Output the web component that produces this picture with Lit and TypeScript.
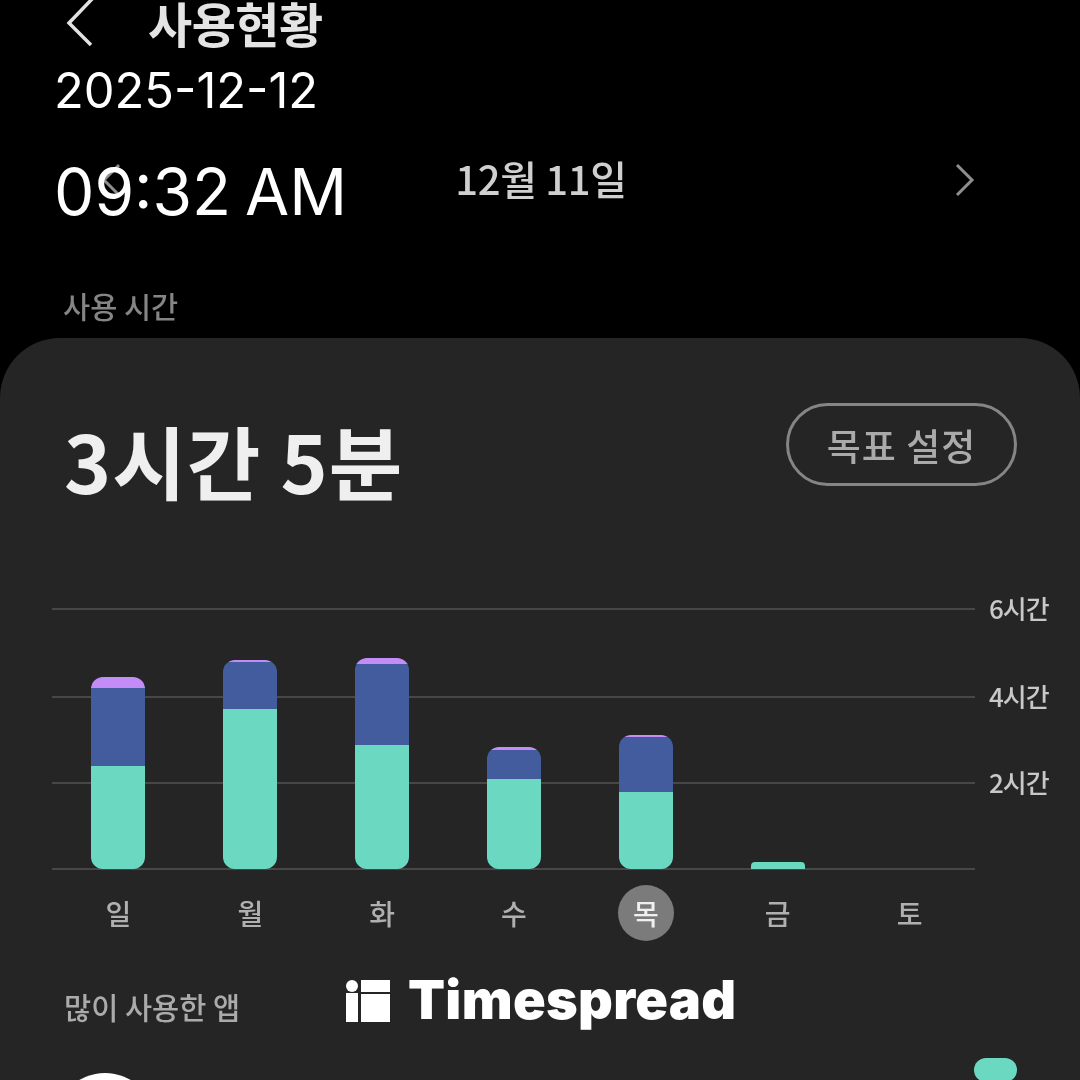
import { LitElement, html, css } from 'lit';
import { customElement } from 'lit/decorators.js';

interface Day {
  label: string;
  purple: number;
  blue: number;
  teal: number;
  today?: boolean;
}

const DAYS: Day[] = [
  { label: '일', purple: 11, blue: 78, teal: 103 },
  { label: '월', purple: 2, blue: 47, teal: 160 },
  { label: '화', purple: 6, blue: 81, teal: 124 },
  { label: '수', purple: 3, blue: 29, teal: 90 },
  { label: '목', purple: 2, blue: 55, teal: 77, today: true },
  { label: '금', purple: 0, blue: 0, teal: 7 },
  { label: '토', purple: 0, blue: 0, teal: 0 },
];

const TICKS = ['6시간', '4시간', '2시간', ''];

@customElement('app-root')
export class AppRoot extends LitElement {
  static styles = css`
    :host {
      display: block;
      position: relative;
      width: 1080px;
      height: 1080px;
      overflow: hidden;
      background: #000;
      font-family: 'Noto Sans CJK KR', 'Noto Sans', sans-serif;
      color: #fff;
    }

    .screen {
      filter: blur(0.7px);
    }

    .header {
      display: flex;
      align-items: center;
      height: 50px;
      padding-left: 66px;
      gap: 51px;
    }

    .back {
      width: 31px;
      height: 50px;
      fill: none;
      stroke: #e2e2e2;
      stroke-width: 3.5;
    }

    .title {
      margin-top: -6px;
      font-size: 48px;
      font-weight: 700;
      line-height: 50px;
      letter-spacing: -0.5px;
      color: #e4e4e4;
    }

    .date-nav {
      display: flex;
      align-items: center;
      justify-content: space-between;
      height: 60px;
      margin-top: 100px;
      padding: 0 105px 0 101px;
    }

    .date-nav svg {
      width: 20px;
      height: 34px;
      fill: none;
      stroke: #8e8e8e;
      stroke-width: 3;
    }

    .date-nav span {
      margin: -4px 0 0 6px;
      font-size: 40px;
      font-weight: 500;
      color: #cfcfcf;
      letter-spacing: -0.3px;
    }

    .section {
      height: 40px;
      line-height: 40px;
      margin: 75px 0 13px 63px;
      font-size: 29.5px;
      font-weight: 500;
      color: #858585;
    }

    .card {
      height: 742px;
      padding-top: 65px;
      box-sizing: border-box;
      background: #252525;
      border-radius: 60px 60px 0 0;
    }

    .summary {
      display: flex;
      justify-content: space-between;
      align-items: flex-start;
      padding: 0 63px 0 64px;
    }

    .total {
      margin-top: 14px;
      height: 86px;
      line-height: 85px;
      font-size: 80px;
      font-weight: 700;
      letter-spacing: 1px;
      color: #efefef;
    }

    .goal {
      display: flex;
      align-items: center;
      justify-content: center;
      width: 231px;
      height: 83px;
      box-sizing: border-box;
      border: 3px solid #858585;
      border-radius: 42px;
      font-size: 37px;
      font-weight: 500;
      letter-spacing: 1px;
      color: #aaa;
    }

    .chart {
      position: relative;
      margin: 105px 0 0 52px;
    }

    .tick {
      display: flex;
      align-items: center;
      height: 2px;
      gap: 14px;
    }

    .tick:nth-child(2) {
      margin-top: 86px;
    }

    .tick:nth-child(n + 3) {
      margin-top: 84px;
    }

    .tick i {
      width: 923px;
      height: 2px;
      background: #474747;
    }

    .tick span {
      margin-top: -4px;
      font-size: 26px;
      font-weight: 500;
      letter-spacing: -1px;
      color: #c8c8c8;
    }

    .bars {
      position: absolute;
      left: 0.5px;
      bottom: 1px;
      width: 923px;
      display: grid;
      grid-template-columns: repeat(7, 1fr);
      align-items: end;
      justify-items: center;
    }

    .bar {
      display: flex;
      flex-direction: column;
      width: 54px;
      overflow: hidden;
      border-radius: 12px;
    }

    .bar.low {
      border-radius: 4px 4px 0 0;
    }

    .purple {
      background: #c48cf6;
    }

    .blue {
      background: #435c9e;
    }

    .teal {
      background: #6bd9c2;
    }

    .days {
      display: grid;
      grid-template-columns: repeat(7, 1fr);
      width: 923px;
      margin: 15px 0 0 52.5px;
      justify-items: center;
    }

    .day {
      display: flex;
      align-items: center;
      justify-content: center;
      width: 56px;
      height: 56px;
      border-radius: 50%;
      font-size: 28px;
      font-weight: 500;
      color: #b0b0b0;
    }

    .day.today {
      background: #7b7b7b;
      color: #f0f0f0;
    }

    .apps {
      height: 40px;
      line-height: 40px;
      margin: 45px 0 0 64px;
      font-size: 29.5px;
      font-weight: 500;
      color: #ababab;
    }

    .top-app {
      display: flex;
      justify-content: space-between;
      align-items: flex-start;
      margin-top: 32px;
      padding: 0 63px 0 55px;
    }

    .app-icon {
      width: 100px;
      height: 100px;
      margin-top: 15px;
      border-radius: 50%;
      background: #fff;
    }

    .app-bar {
      width: 43px;
      height: 24px;
      border-radius: 12px;
      background: #6bd9c2;
    }

    .stamp {
      position: absolute;
      left: 54px;
      font-family: Inter, 'Noto Sans', sans-serif;
      font-weight: 400;
      color: #fff;
      white-space: nowrap;
    }

    .stamp.date {
      top: 61px;
      font-size: 48.8px;
      line-height: 60px;
    }

    .stamp.time {
      top: 152px;
      font-size: 64px;
      line-height: 80px;
      word-spacing: -4px;
    }

    .brand {
      position: absolute;
      left: 346px;
      top: 970px;
      display: flex;
      align-items: center;
      gap: 18px;
      height: 62px;
    }

    .brand svg {
      width: 44px;
      height: 42px;
      fill: #fff;
    }

    .brand span {
      margin-top: -3px;
      font-family: Inter, 'Noto Sans', sans-serif;
      font-size: 54px;
      font-weight: 900;
      line-height: 62px;
      letter-spacing: 0.3px;
      color: #fff;
    }
  `;

  renderBar(d: Day) {
    if (!d.teal) return html`<div></div>`;
    return html`
      <div class="bar ${d.blue ? '' : 'low'}">
        <div class="purple" style="height:${d.purple}px"></div>
        <div class="blue" style="height:${d.blue}px"></div>
        <div class="teal" style="height:${d.teal}px"></div>
      </div>
    `;
  }

  render() {
    return html`
      <div class="screen">
        <div class="header">
          <svg class="back" viewBox="0 0 31 50">
            <path d="M27 -2 L3 23 L25 45" />
          </svg>
          <div class="title">사용현황</div>
        </div>
        <div class="date-nav">
          <svg viewBox="0 0 20 34"><path d="M18 2 L3 17 L18 32" /></svg>
          <span>12월 11일</span>
          <svg viewBox="0 0 20 34"><path d="M2 2 L17 17 L2 32" /></svg>
        </div>
        <div class="section">사용 시간</div>
        <div class="card">
          <div class="summary">
            <div class="total">3시간 5분</div>
            <div class="goal">목표 설정</div>
          </div>
          <div class="chart">
            ${TICKS.map((t) => html`<div class="tick"><i></i><span>${t}</span></div>`)}
            <div class="bars">${DAYS.map((d) => this.renderBar(d))}</div>
          </div>
          <div class="days">
            ${DAYS.map((d) => html`<div class="day ${d.today ? 'today' : ''}">${d.label}</div>`)}
          </div>
          <div class="apps">많이 사용한 앱</div>
          <div class="top-app">
            <div class="app-icon"></div>
            <div class="app-bar"></div>
          </div>
        </div>
      </div>
      <div class="stamp date">2025-12-12</div>
      <div class="stamp time">09:32 AM</div>
      <div class="brand">
        <svg viewBox="0 0 44 42">
          <circle cx="6" cy="6" r="6" />
          <rect x="0" y="13" width="12" height="29" />
          <rect x="15" y="0" width="29" height="12" />
          <rect x="15" y="14" width="29" height="28" />
        </svg>
        <span>Timespread</span>
      </div>
    `;
  }
}

declare global {
  interface HTMLElementTagNameMap {
    'app-root': AppRoot;
  }
}
